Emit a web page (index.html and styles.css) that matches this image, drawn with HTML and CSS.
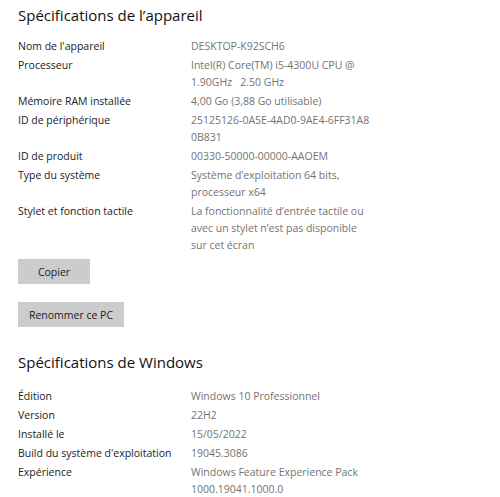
FILE: index.html
```html
<!DOCTYPE html>
<html lang="fr">
<head>
<meta charset="utf-8">
<link rel="stylesheet" href="styles.css">
</head>
<body>
<main class="page">
  <section class="section">
    <h1 class="title">Spécifications de l’appareil</h1>
    <dl class="specs">
      <dt>Nom de l'appareil</dt><dd>DESKTOP-K92SCH6</dd>
      <dt>Processeur</dt><dd>Intel(R) Core(TM) i5-4300U CPU @<br>1.90GHz&nbsp;&nbsp; 2.50 GHz</dd>
      <dt>Mémoire RAM installée</dt><dd>4,00 Go (3,88 Go utilisable)</dd>
      <dt>ID de périphérique</dt><dd>25125126-0A5E-4AD0-9AE4-6FF31A8<br>0B831</dd>
      <dt>ID de produit</dt><dd>00330-50000-00000-AAOEM</dd>
      <dt>Type du système</dt><dd>Système d’exploitation 64 bits,<br>processeur x64</dd>
      <dt>Stylet et fonction tactile</dt><dd>La fonctionnalité d’entrée tactile ou<br>avec un stylet n’est pas disponible<br>sur cet écran</dd>
    </dl>
    <div class="actions">
      <button class="btn btn-copy">Copier</button>
      <button class="btn btn-rename">Renommer ce PC</button>
    </div>
  </section>
  <section class="section">
    <h1 class="title title-win">Spécifications de Windows</h1>
    <dl class="specs specs-win">
      <dt>Édition</dt><dd>Windows 10 Professionnel</dd>
      <dt>Version</dt><dd>22H2</dd>
      <dt>Installé le</dt><dd>15/05/2022</dd>
      <dt>Build du système d'exploitation</dt><dd>19045.3086</dd>
      <dt>Expérience</dt><dd>Windows Feature Experience Pack<br>1000.19041.1000.0</dd>
    </dl>
  </section>
</main>
</body>
</html>
```

FILE: styles.css
```css
html, body {
  margin: 0;
  padding: 0;
  background: #ffffff;
}
body {
  font-family: "Open Sans", "Noto Sans", sans-serif;
  color: #1b1b1b;
  overflow: hidden;
}
.page {
  padding: 2px 18px 0 18px;
}
.title {
  margin: 0;
  font-size: 15px;
  font-weight: 400;
  line-height: 26px;
  color: #111;
}
.title-win {
  margin-top: 22px;
}
.specs {
  display: grid;
  grid-template-columns: 173px 1fr;
  row-gap: 2px;
  margin: 10px 0 0 0;
  font-size: 10.5px;
  line-height: 17px;
}
.specs-win {
  margin-top: 13px;
}
.specs dt {
  margin: 0;
  color: #1b1b1b;
}
.specs dd {
  margin: 0;
  color: #737373;
}
.actions {
  display: flex;
  flex-direction: column;
  align-items: flex-start;
  gap: 18px;
  margin-top: 5px;
}
.btn {
  font-family: inherit;
  font-size: 10.5px;
  color: #1b1b1b;
  background: #cccccc;
  border: none;
  height: 25px;
  padding: 0;
  margin: 0;
}
.btn-copy {
  width: 72px;
}
.btn-rename {
  width: 106px;
}
```
